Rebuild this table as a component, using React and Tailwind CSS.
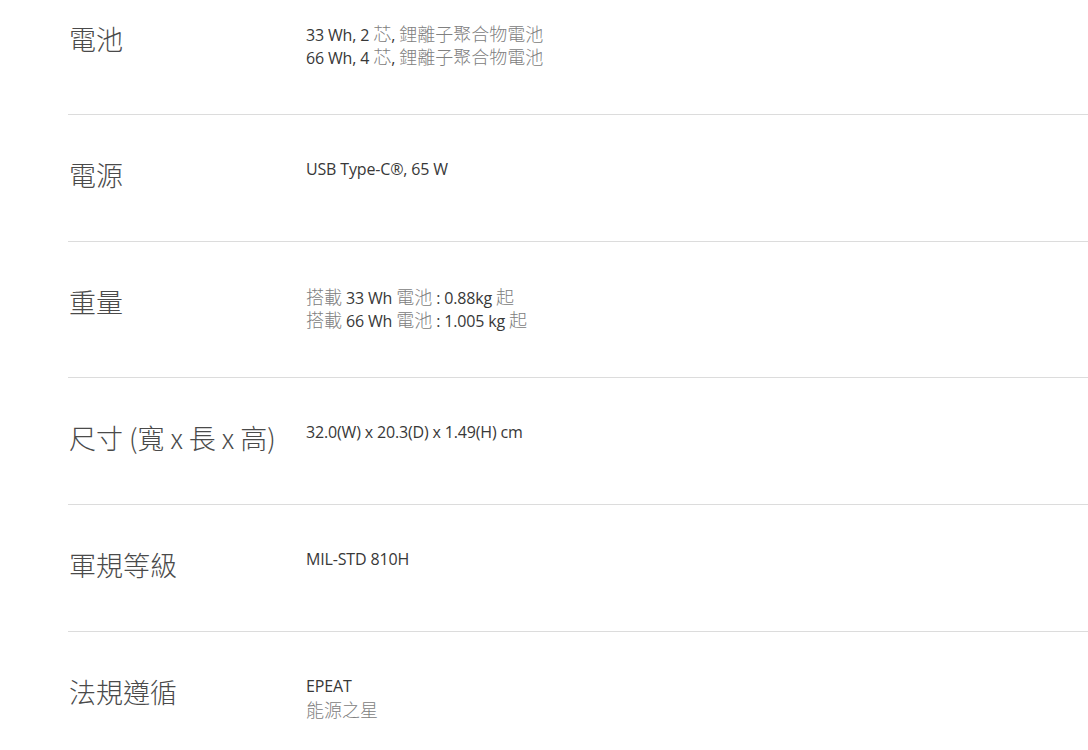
const cjk = '"Noto Sans CJK TC", "Noto Sans CJK SC", sans-serif'

const rows = [
  {
    label: '電池',
    lines: [
      [['33 Wh, 2 '], ['芯', 1], [', '], ['鋰離子聚合物電池', 1]],
      [['66 Wh, 4 '], ['芯', 1], [', '], ['鋰離子聚合物電池', 1]],
    ],
  },
  { label: '電源', lines: [[['USB Type-C®, 65 W']]] },
  {
    label: '重量',
    lines: [
      [['搭載', 1], [' 33 Wh '], ['電池', 1], [' : 0.88kg '], ['起', 1]],
      [['搭載', 1], [' 66 Wh '], ['電池', 1], [' : 1.005 kg '], ['起', 1]],
    ],
  },
  { label: '尺寸 (寬 x 長 x 高)', lines: [[['32.0(W) x 20.3(D) x 1.49(H) cm']]] },
  { label: '軍規等級', lines: [[['MIL-STD 810H']]] },
  { label: '法規遵循', lines: [[['EPEAT']], [['能源之星', 1]]] },
]

function Value({ line }) {
  return (
    <div className="h-[23px] whitespace-pre">
      {line.map(([text, isCjk], i) =>
        isCjk ? (
          <span
            key={i}
            className="text-[#808080] font-light text-[18px] leading-[23px] tracking-normal"
            style={{ fontFamily: cjk }}
          >
            {text}
          </span>
        ) : (
          <span key={i}>{text}</span>
        )
      )}
    </div>
  )
}

export default function App() {
  return (
    <div className="min-h-[750px] bg-white pl-[68px] overflow-hidden">
      {rows.map((row, i) => (
        <div
          key={row.label}
          className={
            'flex items-start pb-[48px] ' +
            (i === 0 ? 'pt-[20px] ' : 'pt-[41px] ') +
            (i < rows.length - 1 ? 'border-b border-[#dcdcdc]' : '')
          }
        >
          <div
            className="w-[238px] shrink-0 text-[27px] leading-[37px] font-light text-[#4a4a4a] pl-[1px]"
            style={{ fontFamily: cjk }}
          >
            {row.label}
          </div>
          <div
            className="mt-[2px] mb-[-2px] text-[16px] leading-[23px] text-[#383838] tracking-[-0.01em]"
            style={{ fontFamily: '"Open Sans", "Noto Sans CJK TC", sans-serif' }}
          >
            {row.lines.map((line, j) => (
              <Value key={j} line={line} />
            ))}
          </div>
        </div>
      ))}
    </div>
  )
}
